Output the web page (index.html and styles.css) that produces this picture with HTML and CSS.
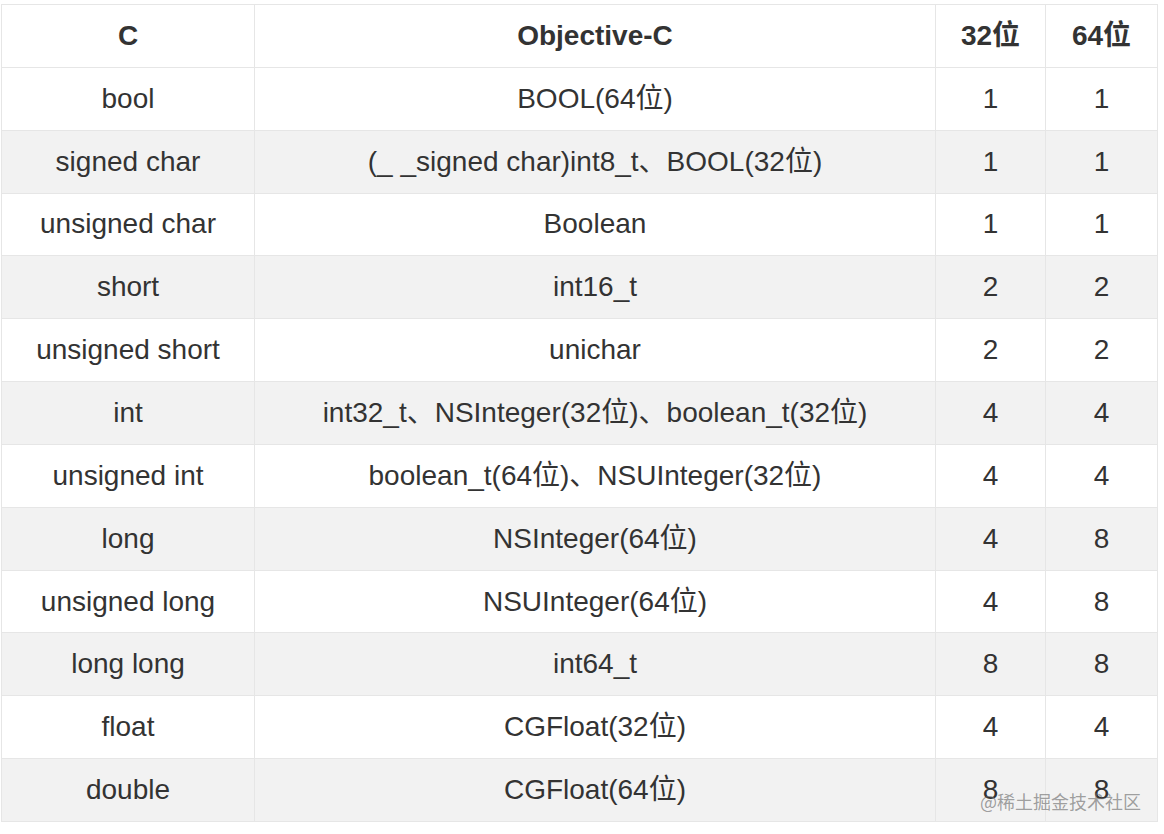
FILE: index.html
```html
<!DOCTYPE html>
<html lang="zh">
<head>
<meta charset="utf-8">
<link rel="stylesheet" href="styles.css">
</head>
<body>
<div class="page">
  <table class="types">
    <colgroup>
      <col class="c1"><col class="c2"><col class="c3"><col class="c4">
    </colgroup>
    <thead>
      <tr><th>C</th><th>Objective-C</th><th>32位</th><th>64位</th></tr>
    </thead>
    <tbody>
      <tr><td>bool</td><td>BOOL(64位)</td><td>1</td><td>1</td></tr>
      <tr><td>signed char</td><td>(_ _signed char)int8_t、BOOL(32位)</td><td>1</td><td>1</td></tr>
      <tr><td>unsigned char</td><td>Boolean</td><td>1</td><td>1</td></tr>
      <tr><td>short</td><td>int16_t</td><td>2</td><td>2</td></tr>
      <tr><td>unsigned short</td><td>unichar</td><td>2</td><td>2</td></tr>
      <tr><td>int</td><td>int32_t、NSInteger(32位)、boolean_t(32位)</td><td>4</td><td>4</td></tr>
      <tr><td>unsigned int</td><td>boolean_t(64位)、NSUInteger(32位)</td><td>4</td><td>4</td></tr>
      <tr><td>long</td><td>NSInteger(64位)</td><td>4</td><td>8</td></tr>
      <tr><td>unsigned long</td><td>NSUInteger(64位)</td><td>4</td><td>8</td></tr>
      <tr><td>long long</td><td>int64_t</td><td>8</td><td>8</td></tr>
      <tr><td>float</td><td>CGFloat(32位)</td><td>4</td><td>4</td></tr>
      <tr><td>double</td><td>CGFloat(64位)</td><td>8</td><td>8</td></tr>
    </tbody>
  </table>
  <div class="watermark">@稀土掘金技术社区</div>
</div>
</body>
</html>
```
FILE: styles.css
```css
html, body {
  margin: 0;
  padding: 0;
  background: #ffffff;
}
.page {
  position: relative;
  padding: 4px 7px 0 1px;
  width: 1156px;
}
.types {
  border-collapse: collapse;
  width: 1156px;
  table-layout: fixed;
  font-family: "Liberation Sans", "Noto Sans CJK SC", sans-serif;
  font-size: 28px;
  line-height: 30px;
  color: #333333;
}
.c1 { width: 253px; }
.c2 { width: 681px; }
.c3 { width: 110px; }
.c4 { width: 112px; }
.types th,
.types td {
  border: 1px solid #e6e6e6;
  height: 62.85px;
  padding: 0;
  text-align: center;
  vertical-align: middle;
  box-sizing: border-box;
}
.types th {
  font-weight: bold;
}
.types tbody tr:nth-child(even) {
  background: #f2f2f2;
}
.watermark {
  position: absolute;
  right: 23px;
  bottom: 11px;
  font-family: "Noto Sans CJK SC", "Liberation Sans", sans-serif;
  font-size: 18px;
  line-height: 20px;
  color: rgba(110, 110, 110, 0.65);
}
```
